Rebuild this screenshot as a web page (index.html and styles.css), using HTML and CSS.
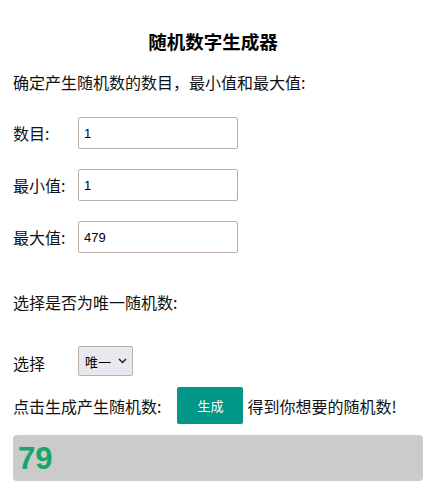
FILE: index.html
```html
<!DOCTYPE html>
<html lang="zh">
<head>
<meta charset="utf-8">
<title>随机数字生成器</title>
<link rel="stylesheet" href="styles.css">
</head>
<body>
<div class="page">
  <h3 class="title">随机数字生成器</h3>
  <p class="intro">确定产生随机数的数目，最小值和最大值:</p>
  <div class="fields">
    <div class="row"><span class="label">数目:</span><input class="field" type="text" value="1"></div>
    <div class="row"><span class="label">最小值:</span><input class="field" type="text" value="1"></div>
    <div class="row"><span class="label">最大值:</span><input class="field" id="max" type="text" value="479"></div>
  </div>
  <p class="intro second">选择是否为唯一随机数:</p>
  <div class="row select-row">
    <span class="label">选择</span>
    <div class="select">唯一<svg class="chev" width="9" height="6" viewBox="0 0 9 6"><path d="M1 1 L4.5 4.5 L8 1" fill="none" stroke="#222" stroke-width="1.5"/></svg></div>
  </div>
  <div class="action">
    <span>点击生成产生随机数:</span>
    <button class="btn" type="button">生成</button>
    <span>得到你想要的随机数!</span>
  </div>
  <div class="result">79</div>
</div>
<script src="script.js"></script>
</body>
</html>
```
FILE: styles.css
```css
html, body {
  margin: 0;
  padding: 0;
  background: #fff;
}
body {
  font-family: "Noto Sans CJK SC", "Liberation Sans", sans-serif;
  font-size: 16px;
  color: #111;
}
.page {
  padding: 0 8px 0 13px;
}
.title {
  margin: 28px 0 0;
  padding-right: 10px;
  font-size: 18.5px;
  line-height: 26px;
  font-weight: bold;
  text-align: center;
  color: #000;
}
.intro {
  margin: 16px 0 0;
  line-height: 24px;
}
.intro.second {
  margin-top: 37px;
}
.fields {
  display: flex;
  flex-direction: column;
  gap: 20px;
  margin-top: 23px;
}
.row {
  display: flex;
  align-items: center;
}
.label {
  width: 65px;
  line-height: 24px;
}
.field {
  box-sizing: border-box;
  width: 160px;
  height: 32px;
  margin: 0;
  padding: 0 5px;
  border: 1px solid #bfaea3;
  border-radius: 2px;
  font-family: "Liberation Sans", "Noto Sans CJK SC", sans-serif;
  font-size: 13px;
  color: #000;
  background: #fff;
  outline: none;
  caret-color: #000;
}
.select-row {
  margin-top: 32px;
}
.select-row .label {
  padding-top: 4px;
}
.select {
  box-sizing: border-box;
  width: 55px;
  height: 30px;
  display: flex;
  align-items: center;
  gap: 7px;
  padding-left: 6px;
  border: 1px solid #bfaea3;
  border-radius: 2px;
  background: #e9e8ee;
  font-size: 13px;
  color: #000;
}
.action {
  display: flex;
  align-items: center;
  margin-top: 11px;
  line-height: 24px;
}
.btn {
  box-sizing: border-box;
  width: 66px;
  height: 37px;
  margin: 0 4px 0 16px;
  border: none;
  border-radius: 2px;
  background: #009688;
  color: #fff;
  font-family: "Noto Sans CJK SC", "Liberation Sans", sans-serif;
  font-size: 13px;
}
.result {
  box-sizing: border-box;
  margin-top: 11px;
  width: 410px;
  height: 46px;
  padding-left: 5px;
  border-radius: 4px;
  background: #cbcbcb;
  color: #17a56c;
  font-family: "Liberation Sans", sans-serif;
  font-weight: bold;
  font-size: 31px;
  line-height: 48px;
}
```
FILE: script.js
```js
var el = document.getElementById('max');
el.focus();
el.setSelectionRange(3, 3);
```
